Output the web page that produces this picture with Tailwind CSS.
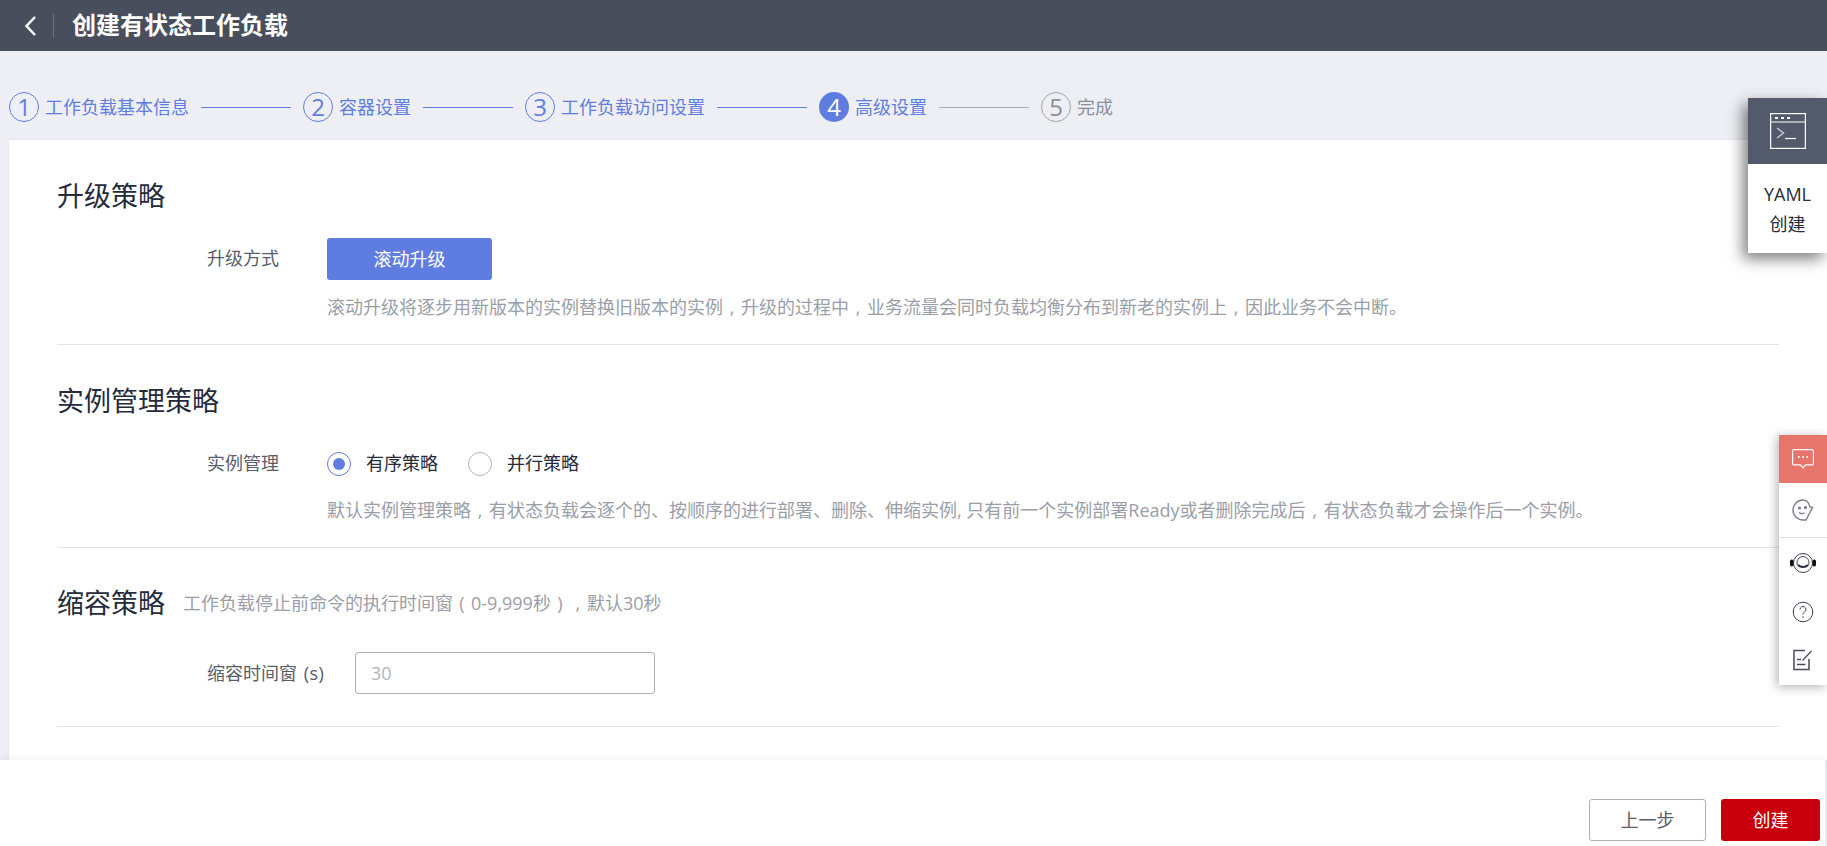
<!DOCTYPE html>
<html lang="zh-CN" class="overflow-hidden">
<head>
  <meta charset="UTF-8">
  <title>创建有状态工作负载</title>
  <script src="https://cdn.jsdelivr.net/npm/@tailwindcss/browser@4"></script>
</head>
<body class="relative h-[846px] w-[1827px] overflow-hidden bg-[#eeeff4] font-['Open_Sans','Noto_Sans_CJK_SC',sans-serif] text-[18px] text-[#252b3a]">

  <!-- Header -->
  <header class="flex h-[51px] items-center bg-[#484e5c] text-white">
    <button class="ml-[24px] flex w-[12px] justify-center">
      <svg width="12" height="20" viewBox="0 0 12 20" fill="none" stroke="white" stroke-width="2.500"><path d="M11 1 2.500 10l8.500 9"/></svg>
    </button>
    <span class="ml-[17px] h-[24px] w-px bg-[#6b7180]"></span>
    <h1 class="ml-[18px] mb-[2px] text-[24px] font-bold leading-none">创建有状态工作负载</h1>
  </header>

  <!-- Steps -->
  <div class="flex h-[89px] items-end pb-[18px] pl-[9px] text-[#5f7de0]">
    <span class="flex size-[30px] items-center justify-center rounded-full border border-[#5f7de0] text-[24px] leading-none">1</span>
    <span class="ml-[6px] leading-[30px]">工作负载基本信息</span>
    <span class="mx-[12px] mb-[14px] h-[1.5px] w-[90px] bg-[#5f7de0]"></span>
    <span class="flex size-[30px] items-center justify-center rounded-full border border-[#5f7de0] text-[24px] leading-none">2</span>
    <span class="ml-[6px] leading-[30px]">容器设置</span>
    <span class="mx-[12px] mb-[14px] h-[1.5px] w-[90px] bg-[#5f7de0]"></span>
    <span class="flex size-[30px] items-center justify-center rounded-full border border-[#5f7de0] text-[24px] leading-none">3</span>
    <span class="ml-[6px] leading-[30px]">工作负载访问设置</span>
    <span class="mx-[12px] mb-[14px] h-[1.5px] w-[90px] bg-[#5f7de0]"></span>
    <span class="flex size-[30px] items-center justify-center rounded-full bg-[#5f7de0] text-[24px] leading-none text-white">4</span>
    <span class="ml-[6px] leading-[30px]">高级设置</span>
    <span class="mx-[12px] mb-[14px] h-[1.5px] w-[90px] bg-[#adadad]"></span>
    <span class="flex size-[30px] items-center justify-center rounded-full border border-[#a5a5a5] text-[24px] leading-none text-[#8a8e99]">5</span>
    <span class="ml-[6px] leading-[30px] text-[#8a8e99]">完成</span>
  </div>

  <!-- Form card -->
  <main class="ml-[9px] h-[620px] bg-white px-[48px] shadow-[0_0_3px_rgba(0,0,0,0.06)]">
    <section class="h-[205px] border-b-[1.5px] border-[#e3e4e6] pt-[38px]">
      <h2 class="text-[27px] leading-[36px]">升级策略</h2>
      <div class="mt-[24px] flex items-center">
        <label class="w-[270px] pb-[2px] pl-[150px] text-[#575d6c]">升级方式</label>
        <button class="h-[42px] w-[165px] rounded-[3px] bg-[#5f7de0] text-white">滚动升级</button>
      </div>
      <p class="ml-[270px] mt-[13px] leading-[28px] text-[#9a9ea8]">滚动升级将逐步用新版本的实例替换旧版本的实例<span class="inline-block w-[18px] text-center">,</span>升级的过程中<span class="inline-block w-[18px] text-center">,</span>业务流量会同时负载均衡分布到新老的实例上<span class="inline-block w-[18px] text-center">,</span>因此业务不会中断。</p>
    </section>

    <section class="h-[203px] border-b-[1.5px] border-[#e3e4e6] pt-[38px]">
      <h2 class="text-[27px] leading-[36px]">实例管理策略</h2>
      <div class="mt-[31px] flex items-center">
        <label class="w-[270px] pl-[150px] text-[#575d6c]">实例管理</label>
        <span class="flex size-[24px] items-center justify-center rounded-full border border-[#5f7de0]"><span class="size-[12px] rounded-full bg-[#5f7de0]"></span></span>
        <span class="ml-[15px]">有序策略</span>
        <span class="ml-[30px] size-[24px] rounded-full border border-[#b4b6bc]"></span>
        <span class="ml-[15px]">并行策略</span>
      </div>
      <p class="ml-[270px] mt-[19px] leading-[28px] text-[#9a9ea8]">默认实例管理策略<span class="inline-block w-[18px] text-center">,</span>有状态负载会逐个的、按顺序的进行部署、删除、伸缩实例, 只有前一个实例部署Ready或者删除完成后<span class="inline-block w-[18px] text-center">,</span>有状态负载才会操作后一个实例。</p>
    </section>

    <section class="h-[179px] border-b-[1.5px] border-[#e3e4e6] pt-[37px]">
      <div class="flex items-center">
        <h2 class="text-[27px] leading-[36px]">缩容策略</h2>
        <span class="ml-[18px] text-[#9a9ea8]">工作负载停止前命令的执行时间窗<span class="inline-block w-[18px] text-center">(</span>0-9,999秒<span class="inline-block w-[18px] text-center">)</span><span class="inline-block w-[18px] text-center">,</span>默认30秒</span>
      </div>
      <div class="mt-[31px] flex items-center">
        <label class="w-[298px] pl-[150px] text-[#575d6c]">缩容时间窗 <span class="ml-[2px] tracking-[0.5px]">(s)</span></label>
        <input type="text" placeholder="30" class="h-[42px] w-[300px] rounded-[3px] border-[1.5px] border-[#adb0b8] px-[15px] placeholder:text-[#b3b5bb]">
      </div>
    </section>
  </main>

  <!-- Footer -->
  <footer class="absolute inset-x-0 bottom-0 mr-[2px] flex h-[86px] items-end justify-end gap-[15px] bg-white pb-[5px] pr-[5px] shadow-[0_-2px_6px_rgba(0,0,0,0.06)]">
    <button class="h-[42px] w-[117px] rounded-[3px] border-[1.5px] border-[#adb0b8] bg-white text-[#575d6c]">上一步</button>
    <button class="h-[42px] w-[99px] rounded-[3px] bg-[#c7000b] text-white">创建</button>
  </footer>

  <!-- YAML panel -->
  <aside class="absolute right-0 top-[98px] h-[155px] w-[79px] bg-white text-center shadow-[-5px_6px_14px_rgba(0,0,0,0.5)]">
    <div class="flex h-[66px] items-center justify-center bg-[#535a6c]">
      <svg width="36" height="36" viewBox="0 0 36 36" fill="none" stroke="white" stroke-width="1.2"><rect x=".6" y=".6" width="34.8" height="34.8"/><path d="M.6 9h34.8"/><path d="M5 5h3M11 5h3M17 5h3" stroke-width="2"/><path d="M7 15l6.500 5-6.500 5" stroke="#c4c6cc" stroke-width="1.500"/><path d="M15 25.500h11"/></svg>
    </div>
    <p class="mt-[15px] leading-[30px] text-[#252b3a]">YAML<br>创建</p>
  </aside>

  <!-- Help toolbar -->
  <aside class="absolute right-0 top-[435px] h-[250px] w-[48px] bg-white shadow-[-2px_2px_10px_rgba(0,0,0,0.3)]">
    <div class="flex h-[48px] items-center justify-center bg-[#e8756c]">
      <svg width="22" height="20" viewBox="0 0 22 20" fill="none" stroke="white" stroke-width="1.200"><path d="M2 .6h18A1.400 1.400 0 0 1 21.400 2v12.500a1.400 1.400 0 0 1-1.400 1.400h-6.500L11 19l-2.500-3.100H2A1.400 1.400 0 0 1 .6 14.500V2A1.400 1.400 0 0 1 2 .6Z"/><path d="M6 8h1.500M10.300 8h1.500M14.600 8h1.500" stroke-width="2"/></svg>
    </div>
    <div class="flex h-[55px] items-center justify-center border-b-[1.5px] border-[#e0e2ea]">
      <svg width="24" height="24" viewBox="0 0 24 24" fill="none" stroke="#7b7f8a" stroke-width="1.400"><path d="M12 2a10 10 0 1 0 0 20h3l6.500-12.500-2.500-.5C18 5 15.500 2 12 2Z"/><circle cx="8.500" cy="10" r=".9" fill="#7b7f8a"/><circle cx="14.500" cy="9.500" r=".9" fill="#7b7f8a"/><path d="M8 14.500c1.800 1.400 4 1.400 5.500.2"/></svg>
    </div>
    <div class="flex h-[50px] items-center justify-center">
      <svg width="26" height="22" viewBox="0 0 26 22" fill="none" stroke="#3c4050" stroke-width="1"><circle cx="13" cy="11" r="9.500"/><path d="M7.500 13a6 6 0 1 1 11 0"/><path d="M8 13c2.800 2.800 7.200 2.800 10 0" stroke="#252b3a" stroke-width="2"/><rect x="0" y="7.500" width="3.500" height="7" rx="1.700" fill="#111" stroke="none"/><rect x="22.500" y="7.500" width="3.500" height="7" rx="1.700" fill="#111" stroke="none"/></svg>
    </div>
    <div class="flex h-[48px] items-center justify-center">
      <svg width="22" height="22" viewBox="0 0 22 22" fill="none" stroke="#3c4050" stroke-width="1"><circle cx="11" cy="11" r="9.800"/><path d="M8 8.500a3 3 0 1 1 4.500 2.600c-1 .6-1.500 1.200-1.500 2.400"/><path d="M11 15.200v1.600"/></svg>
    </div>
    <div class="flex h-[48px] items-center justify-center">
      <svg width="20" height="22" viewBox="0 0 20 22" fill="none" stroke="#4a4a5c" stroke-width="1.500"><path d="M12 1.500H1v19h15V10"/><path d="M9.500 11.500 18.500 2" stroke-width="1.200"/><path d="M4 10.500h4M4 15.500h8.500"/></svg>
    </div>
  </aside>

</body>
</html>
